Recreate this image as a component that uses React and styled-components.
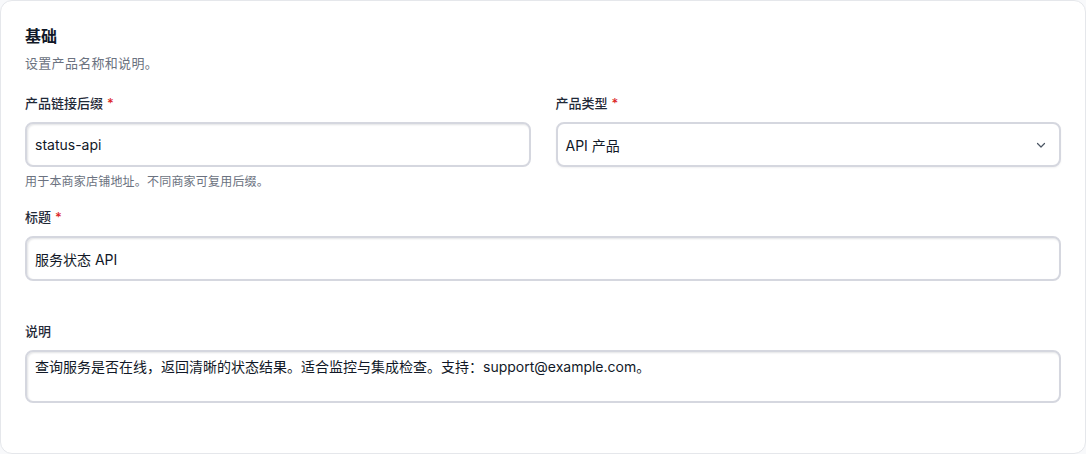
import React from 'react';
import styled, { createGlobalStyle } from 'styled-components';

const GlobalStyle = createGlobalStyle`
  html, body {
    margin: 0;
    background: #f8f9fb;
  }
  body {
    font-family: Inter, "Noto Sans CJK SC", "Noto Sans", sans-serif;
    color: #111827;
  }
  * { box-sizing: border-box; }
`;

const Card = styled.section`
  width: 1086px;
  height: 454px;
  background: #fff;
  border: 1px solid #e5e7eb;
  border-radius: 12px;
  padding: 23px 24px 24px;
  display: flex;
  flex-direction: column;
`;

const Title = styled.h2`
  margin: 0;
  font-size: 16px;
  line-height: 24px;
  font-weight: 600;
  color: #111827;
`;

const Subtitle = styled.p`
  margin: 5px 0 0;
  font-size: 13px;
  line-height: 20px;
  color: #6b7280;
  letter-spacing: 0.3px;
`;

const Grid = styled.div`
  display: grid;
  grid-template-columns: 1fr 1fr;
  column-gap: 25px;
  margin-top: ${p => p.$top}px;
`;

const Field = styled.div`
  display: flex;
  flex-direction: column;
  grid-column: ${p => (p.$wide ? '1 / -1' : 'auto')};
  margin-top: ${p => p.$top || 0}px;
`;

const Label = styled.label`
  font-size: 13px;
  line-height: 20px;
  font-weight: 500;
  color: #1f2937;
  margin-bottom: 9px;
`;

const Star = styled.span`
  color: #dc2626;
  margin-left: 4px;
`;

const boxStyle = `
  width: 100%;
  border: 2px solid #d5d7df;
  border-radius: 8px;
  background: #fff;
  box-shadow: inset 1px 1px 2px rgba(15, 23, 42, 0.12);
  font-family: Inter, "Noto Sans CJK SC", "Noto Sans", sans-serif;
  font-size: 14px;
  color: #111827;
  padding: 0 10px 0 8px;
  outline: none;
`;

const Input = styled.input`
  ${boxStyle}
  height: 45px;
`;

const SelectBox = styled.div`
  ${boxStyle}
  height: 45px;
  display: flex;
  align-items: center;
  justify-content: space-between;
  padding-right: 13px;
  box-shadow: 0 1px 2px rgba(15, 23, 42, 0.06);
`;

const TextArea = styled.textarea`
  ${boxStyle}
  height: 53px;
  padding-top: 5px;
  line-height: 20px;
  resize: none;
`;

const Help = styled.p`
  margin: 7px 0 0;
  font-size: 12px;
  line-height: 16px;
  color: #6b7280;
  letter-spacing: 0.2px;
`;

const Chevron = () => (
  <svg width="10" height="10" viewBox="0 0 10 10" fill="none">
    <path d="M1.5 3.5L5 7l3.5-3.5" stroke="#4b5563" strokeWidth="1.2" strokeLinecap="round" strokeLinejoin="round" />
  </svg>
);

export default function App() {
  return (
    <>
      <GlobalStyle />
      <Card>
        <Title>基础</Title>
        <Subtitle>设置产品名称和说明。</Subtitle>
        <Grid $top={20}>
          <Field>
            <Label>产品链接后缀<Star>*</Star></Label>
            <Input defaultValue="status-api" />
            <Help>用于本商家店铺地址。不同商家可复用后缀。</Help>
          </Field>
          <Field>
            <Label>产品类型<Star>*</Star></Label>
            <SelectBox>
              <span>API 产品</span>
              <Chevron />
            </SelectBox>
          </Field>
          <Field $wide $top={17}>
            <Label>标题<Star>*</Star></Label>
            <Input defaultValue="服务状态 API" />
          </Field>
          <Field $wide $top={40}>
            <Label>说明</Label>
            <TextArea defaultValue="查询服务是否在线，返回清晰的状态结果。适合监控与集成检查。支持：support@example.com。" />
          </Field>
        </Grid>
      </Card>
    </>
  );
}
